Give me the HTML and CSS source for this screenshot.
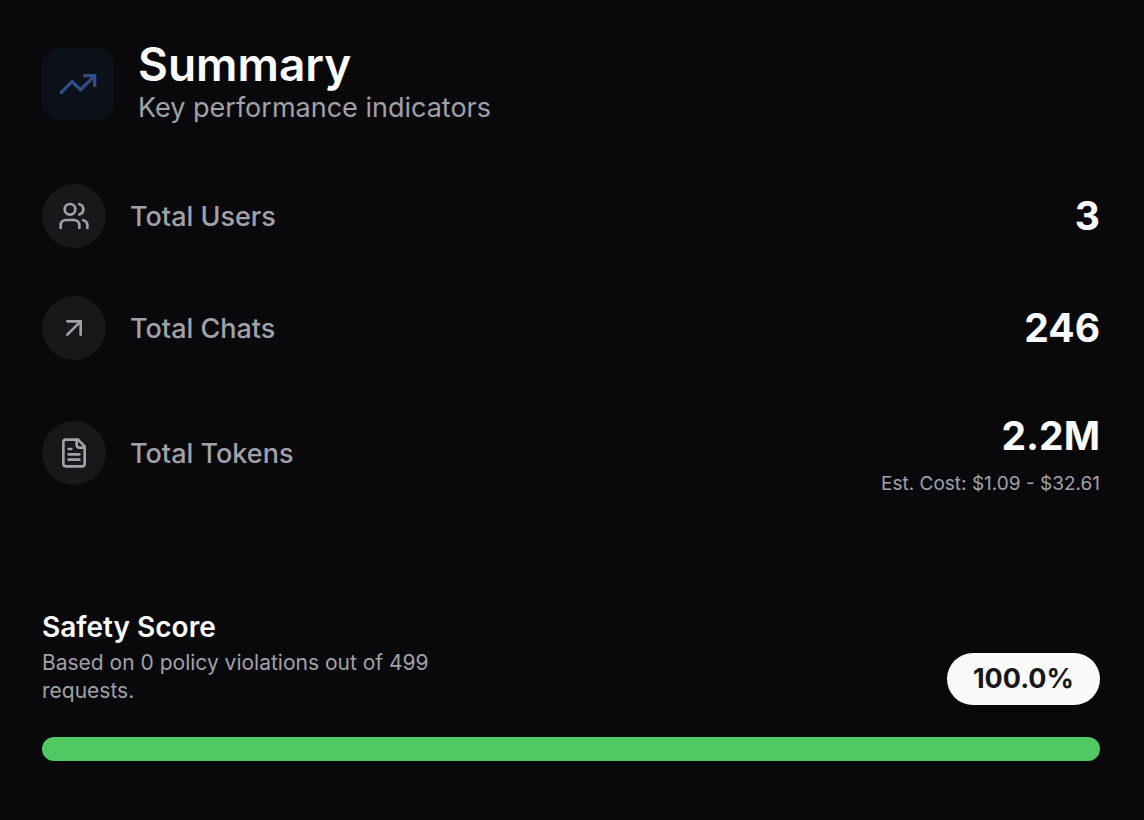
FILE: index.html
```
<!DOCTYPE html>
<html lang="en">
<head>
    <meta charset="UTF-8">
    <meta name="viewport" content="width=device-width, initial-scale=1.0">
    <title>Summary</title>
    <link rel="stylesheet" href="styles.css">
</head>
<body>

    <main class="summary">
        <header class="summary-header">
            <div class="header-icon">
                <svg class="icon icon-large" viewBox="0 0 24 24" aria-hidden="true">
                    <path d="M16 7h6v6"/>
                    <path d="m22 7-8.5 8.5-5-5L2 17"/>
                </svg>
            </div>
            <div>
                <h1 class="title">Summary</h1>
                <p class="subtitle">Key performance indicators</p>
            </div>
        </header>

        <!-- Metrics -->
        <dl class="metrics">
            <div class="metric">
                <dt class="metric-name">
                    <span class="metric-icon">
                        <svg class="icon" viewBox="0 0 24 24" aria-hidden="true">
                            <path d="M16 21v-2a4 4 0 0 0-4-4H6a4 4 0 0 0-4 4v2"/>
                            <circle cx="9" cy="7" r="4"/>
                            <path d="M22 21v-2a4 4 0 0 0-3-3.87"/>
                            <path d="M16 3.13a4 4 0 0 1 0 7.75"/>
                        </svg>
                    </span>
                    Total Users
                </dt>
                <dd class="metric-data">
                    <div class="metric-value">3</div>
                </dd>
            </div>

            <div class="metric">
                <dt class="metric-name">
                    <span class="metric-icon">
                        <svg class="icon" viewBox="0 0 24 24" aria-hidden="true">
                            <path d="M7 7h10v10"/>
                            <path d="M7 17 17 7"/>
                        </svg>
                    </span>
                    Total Chats
                </dt>
                <dd class="metric-data">
                    <div class="metric-value">246</div>
                </dd>
            </div>

            <div class="metric">
                <dt class="metric-name">
                    <span class="metric-icon">
                        <svg class="icon" viewBox="0 0 24 24" aria-hidden="true">
                            <path d="M15 2H6a2 2 0 0 0-2 2v16a2 2 0 0 0 2 2h12a2 2 0 0 0 2-2V7Z"/>
                            <path d="M14 2v4a2 2 0 0 0 2 2h4"/>
                            <path d="M10 9H8"/>
                            <path d="M16 13H8"/>
                            <path d="M16 17H8"/>
                        </svg>
                    </span>
                    Total Tokens
                </dt>
                <dd class="metric-data">
                    <div class="metric-value">2.2M</div>
                    <div class="metric-cost">Est. Cost: $1.09 - $32.61</div>
                </dd>
            </div>
        </dl>

        <!-- Safety score -->
        <section class="safety">
            <div class="safety-row">
                <div class="safety-text">
                    <h2 class="safety-title"><label for="safety-score">Safety Score</label></h2>
                    <p class="safety-note">Based on 0 policy violations out of 499 requests.</p>
                </div>
                <span class="badge">100.0%</span>
            </div>
            <progress class="safety-bar" id="safety-score" value="100" max="100">100%</progress>
        </section>
    </main>

</body>
</html>
```

FILE: styles.css
```
* {
    box-sizing: border-box;
    margin: 0;
}

body {
    min-height: 100vh;
    background-color: #09090b;
    color: #fafafa;
    font-family: Inter, "Liberation Sans", sans-serif;
}

.summary {
    padding: 40px 44px 56px 42px;
}

.summary-header {
    display: flex;
    align-items: center;
    gap: 24px;
}

.header-icon {
    display: flex;
    align-items: center;
    justify-content: center;
    width: 72px;
    height: 72px;
    border-radius: 16px;
    background-color: #0c1018;
    color: #304d88;
}

.icon {
    width: 32px;
    height: 32px;
    fill: none;
    stroke: currentColor;
    stroke-width: 2;
    stroke-linecap: round;
    stroke-linejoin: round;
}

.icon-large {
    width: 40px;
    height: 40px;
}

.title {
    font-size: 46px;
    font-weight: 600;
    line-height: 48px;
}

.subtitle {
    font-size: 27px;
    line-height: 40px;
    color: #a1a1aa;
}

.metrics {
    display: flex;
    flex-direction: column;
    gap: 48px;
    margin-top: 56px;
}

.metric {
    display: flex;
    align-items: center;
    justify-content: space-between;
}

.metric-name {
    display: flex;
    align-items: center;
    gap: 24px;
    font-size: 27px;
    font-weight: 500;
    color: #a1a1aa;
}

.metric-icon {
    display: flex;
    align-items: center;
    justify-content: center;
    width: 64px;
    height: 64px;
    border-radius: 50%;
    background-color: #18181a;
}

.metric-data {
    text-align: right;
}

.metric-value {
    font-size: 39px;
    font-weight: 700;
    line-height: 56px;
}

.metric-cost {
    margin-top: 6px;
    font-size: 19px;
    line-height: 28px;
    color: #a1a1aa;
}

.safety {
    margin-top: 108px;
}

.safety-row {
    display: flex;
    align-items: flex-end;
    justify-content: space-between;
}

.safety-text {
    max-width: 410px;
}

.safety-title {
    font-size: 28px;
    font-weight: 600;
    line-height: 43px;
}

.safety-note {
    font-size: 21px;
    line-height: 28px;
    color: #a1a1aa;
}

.badge {
    padding: 0 26px;
    border-radius: 26px;
    background-color: #fafafa;
    color: #18181b;
    font-size: 27px;
    font-weight: 700;
    line-height: 52px;
}

.safety-bar {
    display: block;
    width: 100%;
    height: 24px;
    margin-top: 32px;
    border: none;
    border-radius: 12px;
    overflow: hidden;
    appearance: none;
    background-color: #27272a;
}

.safety-bar::-webkit-progress-bar {
    background-color: #27272a;
}

.safety-bar::-webkit-progress-value {
    background-color: #51c962;
}

.safety-bar::-moz-progress-bar {
    background-color: #51c962;
}
```
